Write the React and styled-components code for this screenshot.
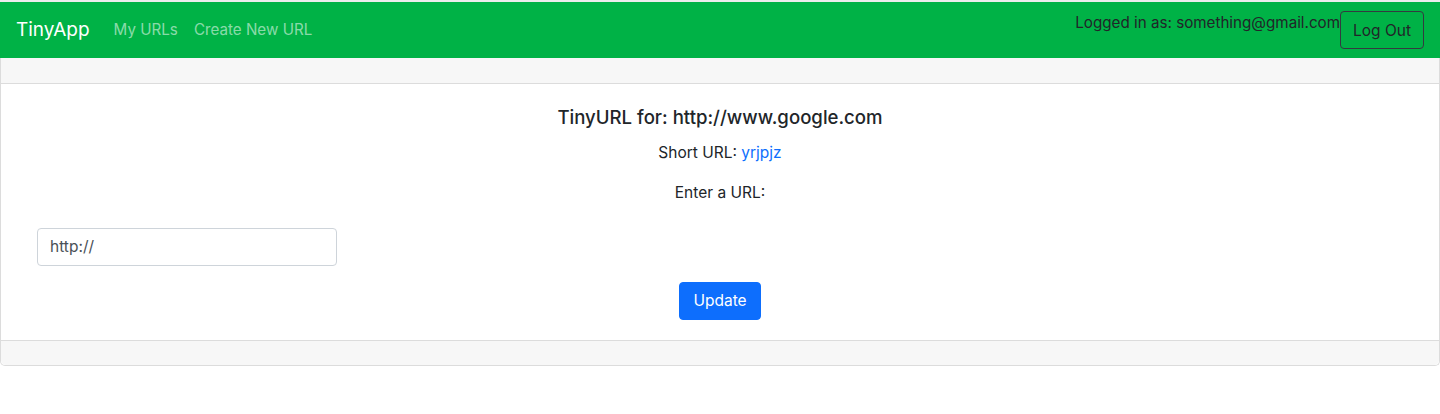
import React from "react";
import styled, { createGlobalStyle } from "styled-components";

const GlobalStyle = createGlobalStyle`
  body {
    margin: 0;
    font-family: Inter, "Liberation Sans", sans-serif;
    font-size: 16px;
    line-height: 1.5;
    color: #212529;
    background: #fff;
  }
  * { box-sizing: border-box; }
`;

const Page = styled.div`
  border-top: 2px solid #ececec;
`;

const Nav = styled.nav`
  display: flex;
  align-items: center;
  justify-content: space-between;
  height: 56px;
  padding: 0 16px;
  background: #00b246;
`;

const NavLeft = styled.div`
  display: flex;
  align-items: center;
`;

const Brand = styled.a`
  font-size: 19px;
  color: #fff;
  margin-right: 24px;
  text-decoration: none;
`;

const NavLink = styled.a`
  color: rgba(255, 255, 255, 0.55);
  font-size: 15.2px;
  margin-right: 16px;
  text-decoration: none;
`;

const NavRight = styled.div`
  display: flex;
  align-items: flex-start;
  align-self: stretch;
  padding-top: 9px;
`;

const LoggedIn = styled.span`
  font-size: 15.2px;
  color: #212529;
  line-height: 24px;
`;

const LogOut = styled.button`
  font-family: inherit;
  font-size: 15.5px;
  color: #212529;
  background: transparent;
  border: 1px solid #343a40;
  border-radius: 4px;
  padding: 0 12px;
  height: 38px;
`;

const Card = styled.div`
  border: 1px solid #dcdcdc;
  border-top: none;
  border-radius: 0 0 5px 5px;
`;

const CardHeader = styled.div`
  height: 26px;
  background: #f7f7f7;
  border-bottom: 1px solid #dcdcdc;
`;

const CardBody = styled.div`
  padding: 19px 36px 20px;
  display: flex;
  flex-direction: column;
`;

const Title = styled.h5`
  margin: 0 0 10px;
  font-size: 18.6px;
  font-weight: 500;
  text-align: center;
  line-height: 28px;
`;

const Line = styled.p`
  margin: 0 0 17px;
  font-size: 15.5px;
  text-align: center;
`;

const ShortLink = styled.a`
  color: #0d6efd;
  text-decoration: none;
`;

const Input = styled.input`
  width: 300px;
  height: 38px;
  margin-top: 6px;
  padding: 6px 12px;
  font-family: inherit;
  font-size: 15.5px;
  color: #495057;
  border: 1px solid #ced4da;
  border-radius: 4px;
`;

const Submit = styled.button`
  align-self: center;
  margin-top: 16px;
  height: 38px;
  padding: 0 13px;
  font-family: inherit;
  font-size: 15.5px;
  color: #fff;
  background: #0d6efd;
  border: 1px solid #0d6efd;
  border-radius: 4px;
`;

const CardFooter = styled.div`
  height: 25px;
  background: #f7f7f7;
  border-top: 1px solid #dcdcdc;
  border-radius: 0 0 5px 5px;
`;

export default function App() {
  return (
    <Page>
      <GlobalStyle />
      <Nav>
        <NavLeft>
          <Brand href="#">TinyApp</Brand>
          <NavLink href="#">My URLs</NavLink>
          <NavLink href="#">Create New URL</NavLink>
        </NavLeft>
        <NavRight>
          <LoggedIn>Logged in as: something@gmail.com</LoggedIn>
          <LogOut>Log Out</LogOut>
        </NavRight>
      </Nav>
      <Card>
        <CardHeader />
        <CardBody>
          <Title>TinyURL for: http://www.google.com</Title>
          <Line>Short URL: <ShortLink href="#">yrjpjz</ShortLink></Line>
          <Line>Enter a URL:</Line>
          <Input defaultValue="http://" />
          <Submit>Update</Submit>
        </CardBody>
        <CardFooter />
      </Card>
    </Page>
  );
}
